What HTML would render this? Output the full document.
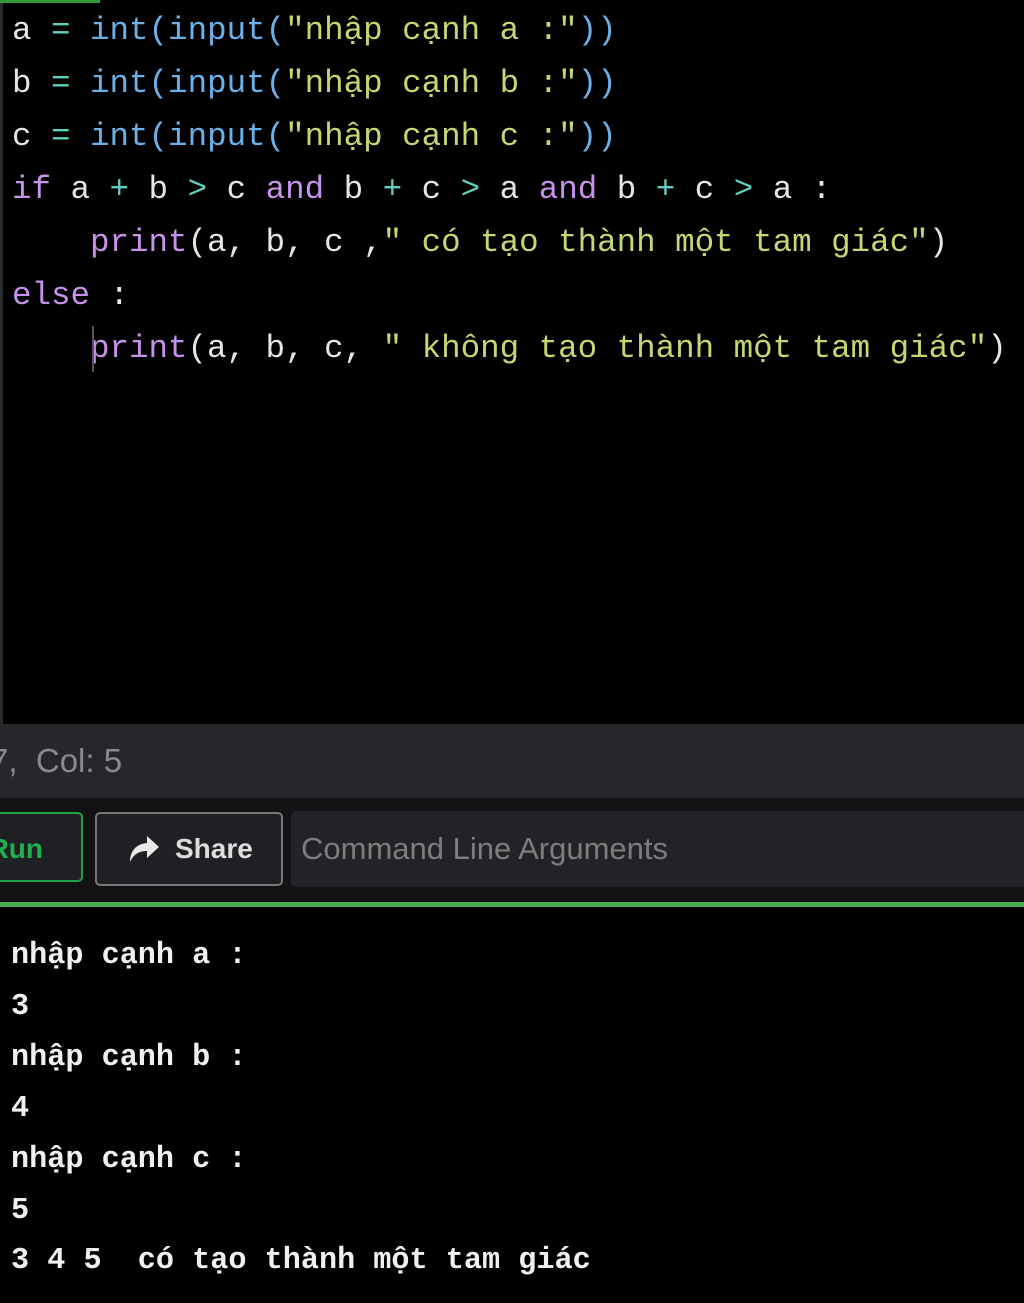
<!DOCTYPE html>
<html><head><meta charset="utf-8"><style>
body{margin:0;width:1024px;height:1303px;background:#000;overflow:hidden;position:relative;font-family:"Liberation Mono","DejaVu Sans Mono",monospace}
.code{position:absolute;left:0;top:0;width:1024px;height:724px;background:#000;border-left:3px solid #2a2a2a;box-sizing:border-box}
.topg{position:absolute;left:0;top:0;width:100px;height:3px;background:#2e9b3a}
.ln{position:absolute;left:12px;font-size:32.5px;color:#e6e6e6;white-space:pre;line-height:53px}
.b{color:#6cb0e8}.s{color:#c2d870}.k{color:#c792ea}.o{color:#5fcfc0}
.status{position:absolute;left:-10px;top:724px;width:1034px;height:74px;background:#26272b;color:#8a8a8a;font-family:"Liberation Sans",sans-serif;font-size:33px;line-height:74px}
.tool{position:absolute;left:0;top:798px;width:1024px;height:104px;background:#121214}
.run{position:absolute;left:-20px;top:14px;width:103px;height:70px;border:2px solid #1fa14a;border-radius:5px;background:#1f2023;color:#22b04d;font:bold 28px "Liberation Sans",sans-serif;line-height:70px;text-align:right;box-sizing:border-box;padding-right:38px}
.share{position:absolute;left:95px;top:14px;width:188px;height:74px;border:2px solid #777;border-radius:5px;background:#1f2023;color:#ddd;font:bold 28px "Liberation Sans",sans-serif;line-height:70px;box-sizing:border-box;padding-left:78px}
.inp{position:absolute;left:291px;top:13px;width:740px;height:76px;background:#222326;border-radius:5px;color:#7d7d7d;font:31px "Liberation Sans",sans-serif;line-height:76px;padding-left:10px;box-sizing:border-box}
.green{position:absolute;left:0;top:902px;width:1024px;height:5px;background:#4caf50}
.out{position:absolute;left:11px;font-size:30.2px;font-weight:bold;color:#f0f0f0;white-space:pre;line-height:51px}
</style></head><body>
<div class="code"></div><div class="topg"></div>
<div class="ln" style="top:4px">a <span class="o">=</span> <span class="b">int(input(</span><span class="s">"nhập cạnh a :"</span><span class="b">))</span></div>
<div class="ln" style="top:57px">b <span class="o">=</span> <span class="b">int(input(</span><span class="s">"nhập cạnh b :"</span><span class="b">))</span></div>
<div class="ln" style="top:110px">c <span class="o">=</span> <span class="b">int(input(</span><span class="s">"nhập cạnh c :"</span><span class="b">))</span></div>
<div class="ln" style="top:163px"><span class="k">if</span> a <span class="o">+</span> b <span class="o">&gt;</span> c <span class="k">and</span> b <span class="o">+</span> c <span class="o">&gt;</span> a <span class="k">and</span> b <span class="o">+</span> c <span class="o">&gt;</span> a :</div>
<div class="ln" style="top:216px">    <span class="k">print</span>(a, b, c ,<span class="s">" có tạo thành một tam giác"</span>)</div>
<div class="ln" style="top:269px"><span class="k">else</span> :</div>
<div class="ln" style="top:322px">    <span class="k">print</span>(a, b, c, <span class="s">" không tạo thành một tam giác"</span>)</div>
<div style="position:absolute;left:92px;top:326px;width:2px;height:46px;background:#555"></div>
<div class="status">7,&nbsp; Col: 5</div>
<div class="tool">
<div class="run">Run</div>
<div class="share"><svg style="position:absolute;left:30px;top:20px" width="34" height="30" viewBox="0 0 34 30"><path d="M20 2 L32 13 L20 24 L20 17 C12 17 7 20 3 28 C3 17 9 10 20 9 Z" fill="#e8e8e8"/></svg>Share</div>
<div class="inp">Command Line Arguments</div>
</div>
<div class="green"></div>
<div class="out" style="top:931px">nhập cạnh a :</div>
<div class="out" style="top:982px">3</div>
<div class="out" style="top:1033px">nhập cạnh b :</div>
<div class="out" style="top:1084px">4</div>
<div class="out" style="top:1135px">nhập cạnh c :</div>
<div class="out" style="top:1186px">5</div>
<div class="out" style="top:1236px">3 4 5  có tạo thành một tam giác</div>
</body></html>
